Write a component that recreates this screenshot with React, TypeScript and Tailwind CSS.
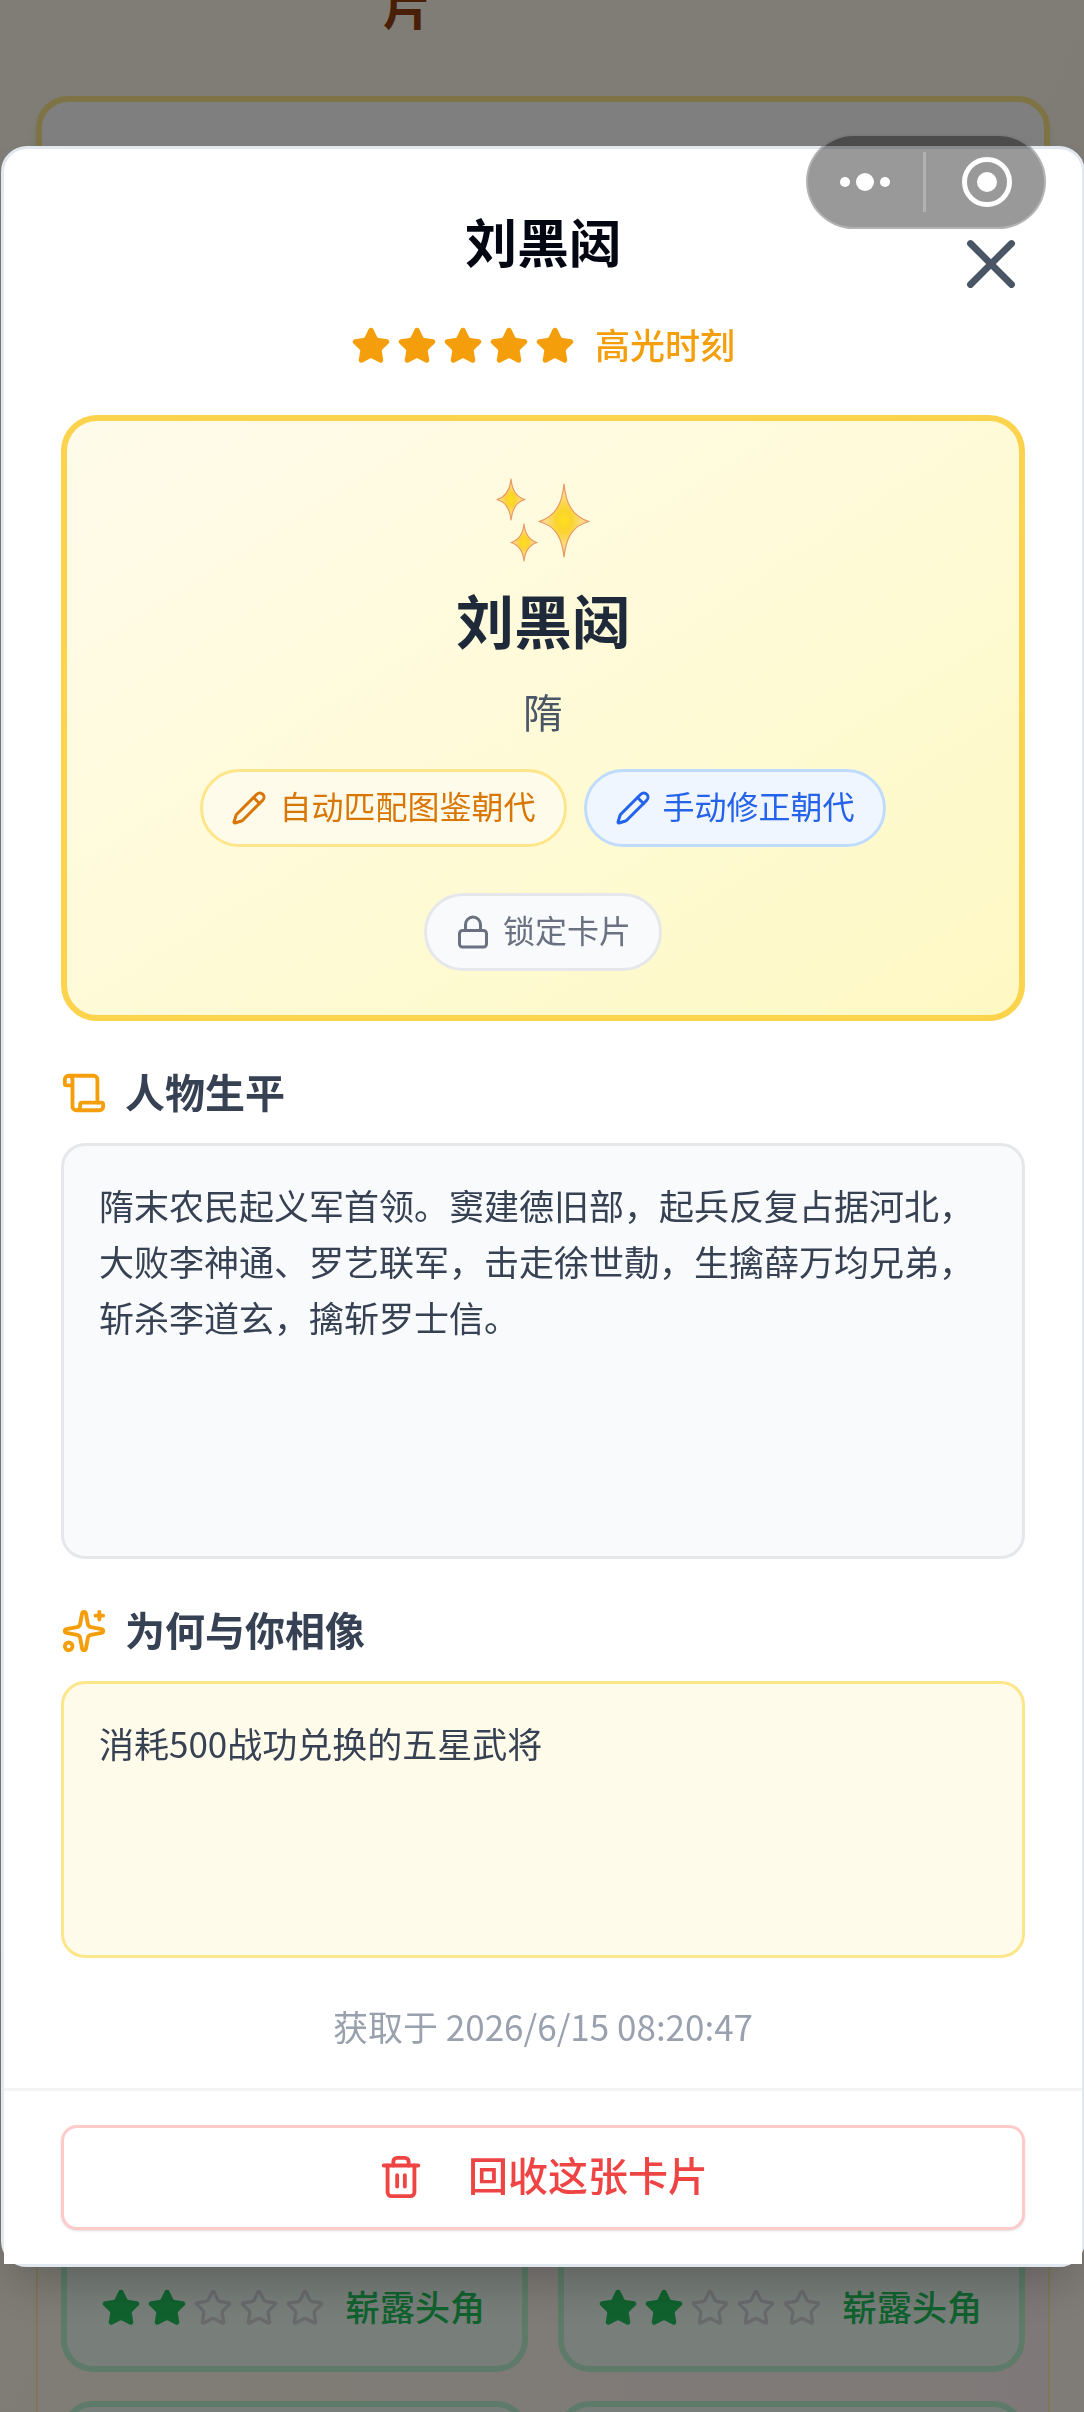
import { useState } from 'react';
import type { ReactNode } from 'react';
import { Lock, Pencil, Scroll, Sparkles, Star, Trash2, X } from 'lucide-react';

const card = {
  name: '刘黑闼',
  dynasty: '隋',
  stars: 5,
  rank: '高光时刻',
  biography:
    '隋末农民起义军首领。窦建德旧部，起兵反复占据河北，大败李神通、罗艺联军，击走徐世勣，生擒薛万均兄弟，斩杀李道玄，擒斩罗士信。',
  reason: '消耗500战功兑换的五星武将',
  obtainedAt: '2026/6/15 08:20:47',
};

const actions = [
  { label: '自动匹配图鉴朝代', icon: Pencil, style: 'bg-amber-50 border-[#fde68a] text-[#d97706]' },
  { label: '手动修正朝代', icon: Pencil, style: 'bg-[#eff6ff] border-[#bfdbfe] text-[#2563eb]' },
  { label: '锁定卡片', icon: Lock, style: 'bg-gray-50 border-gray-200 text-gray-500' },
];

const Rating = ({ value, label, tone }: { value: number; label: string; tone: string }) => (
  <div className={`flex items-center gap-5 h-[50px] ${tone}`}>
    <div className="flex gap-[6px]">
      {[1, 2, 3, 4, 5].map((n) => (
        <Star
          key={n}
          size={40}
          className={n <= value ? 'fill-current' : 'text-gray-300'}
        />
      ))}
    </div>
    <span className="pb-1 text-[35px] leading-[50px] font-medium whitespace-nowrap">{label}</span>
  </div>
);

const SparkleArt = () => (
  <svg width="126" height="96" viewBox="0 12 126 96" aria-hidden="true">
    <defs>
      <radialGradient id="spark">
        <stop offset="0" stopColor="#fde01f" />
        <stop offset="0.3" stopColor="#fbd42c" />
        <stop offset="0.75" stopColor="#fbdc8c" />
        <stop offset="1" stopColor="#f3b07c" />
      </radialGradient>
    </defs>
    <g fill="url(#spark)" stroke="#e99a62" strokeWidth="1.2" strokeLinejoin="round">
      <path d="M84 23C86 43 92 55 109 60.500C92 65 86 77 84 96C82 77 76 65 59 60.500C76 55 82 43 84 23Z" />
      <path d="M31 18C32 29 36 36 45 38.500C36 41 32 48 31 59C30 48 26 41 17 38.500C26 36 30 29 31 18Z" />
      <path d="M44 63C45 73 49 79 57 81.500C49 84 45 90 44 100C43 90 39 84 31 81.500C39 79 43 73 44 63Z" />
    </g>
  </svg>
);

type SectionProps = {
  id: string;
  title: string;
  icon: ReactNode;
  value: string;
  box: string;
};

const Section = ({ id, title, icon, value, box }: SectionProps) => (
  <section className="mt-[42px]">
    <label
      htmlFor={id}
      className="flex items-center gap-[18px] h-[60px] mb-5 text-[40px] leading-[60px] font-bold text-gray-700"
    >
      <span className="text-[#f59e0b]">{icon}</span>
      <span className="pb-1">{title}</span>
    </label>
    <textarea
      id={id}
      defaultValue={value}
      className={`block w-full resize-none rounded-3xl border-3 px-[35px] py-[31px] text-[35px] leading-[56px] text-gray-700 outline-none ${box}`}
    />
  </section>
);

const Collection = () => (
  <main className="h-screen overflow-hidden flex flex-col pl-[36px] pr-[34px] bg-linear-to-br from-amber-50 to-orange-50">
    <div className="h-7 mb-[68px] pl-[347px] flex items-end shrink-0">
      <h1 className="text-[48px] leading-[48px] font-bold text-[#92400e]">片</h1>
    </div>
    <div className="flex-1 rounded-[32px] border-6 border-[#fde68a] bg-white shadow-lg"></div>
    <div className="shrink-0 border-x-2 border-[#fde68a]/60 px-[23px] bg-linear-to-r from-amber-50 to-rose-50">
      <div className="grid grid-cols-2 gap-x-[30px] gap-y-[29px]">
        {[1, 2].map((n) => (
          <div
            key={n}
            className="rounded-b-[32px] border-6 border-t-0 border-[#bbf7d0] bg-green-50 pt-40 px-[34px] pb-[33px]"
          >
            <Rating value={2} label="崭露头角" tone="text-[#22c55e]" />
          </div>
        ))}
        {[3, 4].map((n) => (
          <div
            key={n}
            className="h-[11px] overflow-hidden"
          >
            <div className="h-24 rounded-[32px] border-6 border-[#bbf7d0] bg-green-50"></div>
          </div>
        ))}
      </div>
    </div>
  </main>
);

const Capsule = () => (
  <div className="fixed top-[134px] right-[38px] flex items-center w-[240px] h-[95px] rounded-full border-2 border-white/25 bg-black/40">
    <button aria-label="更多" className="flex-1 flex items-center justify-center gap-[6px] h-full">
      <span className="size-[10px] rounded-full bg-white"></span>
      <span className="size-[18px] rounded-full bg-white"></span>
      <span className="size-[10px] rounded-full bg-white"></span>
    </button>
    <span className="w-[3px] h-[60px] bg-white/25"></span>
    <button aria-label="退出" className="flex-1 flex items-center justify-center h-full pl-1">
      <span className="flex items-center justify-center size-[50px] rounded-full border-5 border-white">
        <span className="size-5 rounded-full bg-white"></span>
      </span>
    </button>
  </div>
);

const CardDialog = ({ onClose }: { onClose: () => void }) => (
  <div className="fixed inset-0 flex items-center overflow-hidden bg-black/50 pl-px">
    <div
      role="dialog"
      aria-modal="true"
      aria-labelledby="card-title"
      className="relative w-screen shrink-0 rounded-[26px] border-3 border-slate-200 bg-white shadow-2xl"
    >
      <button
        aria-label="关闭"
        onClick={onClose}
        className="absolute top-[74px] right-[50px] text-gray-600"
      >
        <X size={82} />
      </button>

      <div className="px-[57px] pt-14 pb-[38px]">
        <h2 id="card-title" className="text-center text-[52px] leading-[72px] font-bold text-gray-950">
          {card.name}
        </h2>
        <div className="flex justify-center mt-11">
          <Rating value={card.stars} label={card.rank} tone="text-[#f59e0b]" />
        </div>

        <div className="mt-11 flex flex-col items-center rounded-[36px] border-6 border-[#fcd34d] bg-linear-to-br from-[#fffbeb] to-[#fef9c3] px-10 pt-[52px] pb-11">
          <SparkleArt />
          <h3 className="mt-[10px] text-[58px] leading-[80px] font-bold text-gray-800">{card.name}</h3>
          <p className="mt-6 text-[40px] leading-[56px] text-gray-600">{card.dynasty}</p>
          <div className="mt-[30px] flex flex-wrap justify-center gap-x-[17px] gap-y-[46px]">
            {actions.map(({ label, icon: Icon, style }) => (
              <button
                key={label}
                className={`flex items-center gap-3 h-[78px] px-7 rounded-full border-3 text-[32px] leading-[48px] ${style}`}
              >
                <Icon size={36} />
                <span className="pb-[6px]">{label}</span>
              </button>
            ))}
          </div>
        </div>

        <Section
          id="biography"
          title="人物生平"
          icon={<Scroll size={46} />}
          value={card.biography}
          box="h-[416px] border-gray-200 bg-gray-50"
        />
        <Section
          id="reason"
          title="为何与你相像"
          icon={<Sparkles size={46} />}
          value={card.reason}
          box="h-[277px] border-[#fde68a] bg-[#fffbeb]"
        />

        <p className="mt-11 text-center text-[35px] leading-[48px] text-gray-400">
          获取于 {card.obtainedAt}
        </p>
      </div>

      <div className="border-t-3 border-gray-100 bg-white px-[57px] py-[34px]">
        <button className="flex items-center justify-center gap-11 w-full h-[105px] rounded-2xl border-3 border-[#fecaca] bg-white text-[40px] leading-[60px] font-medium text-[#ef4444] shadow-sm">
          <Trash2 size={46} />
          <span className="pb-[6px]">回收这张卡片</span>
        </button>
      </div>
    </div>
  </div>
);

const App = () => {
  const [open, setOpen] = useState(true);

  return (
    <div className="font-['Noto_Sans_CJK_SC',sans-serif]">
      <Collection />
      {open && <CardDialog onClose={() => setOpen(false)} />}
      <Capsule />
    </div>
  );
};

export default App;
